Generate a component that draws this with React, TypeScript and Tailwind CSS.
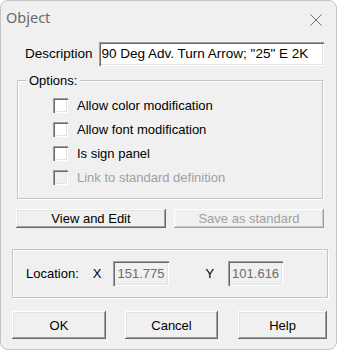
import React from "react";

const raised =
  "shadow-[inset_-1px_-1px_0_#696969,inset_1px_1px_0_#ffffff,inset_-2px_-2px_0_#a0a0a0,inset_2px_2px_0_#e3e3e3]";
const raisedDisabled =
  "shadow-[inset_-1px_-1px_0_#a0a0a0,inset_1px_1px_0_#ffffff,inset_-2px_-2px_0_#c8c8c8,inset_2px_2px_0_#f0f0f0]";
const sunken =
  "shadow-[inset_1px_1px_0_#a0a0a0,inset_2px_2px_0_#696969,inset_-1px_-1px_0_#ffffff,inset_-2px_-2px_0_#e3e3e3]";
const etched = "border border-[#c4c4c4] shadow-[1px_1px_0_#ffffff,inset_1px_1px_0_#ffffff]";

function CheckRow({ label, disabled }: { label: string; disabled?: boolean }) {
  return (
    <div className="h-[24px] flex items-center">
      <div
        className={`w-[15px] h-[15px] ${disabled ? "bg-[#f0f0f0]" : "bg-white"} shadow-[inset_1px_1px_0_#a0a0a0,inset_2px_2px_0_#696969,inset_-1px_-1px_0_#ffffff,inset_-2px_-2px_0_#e3e3e3]`}
      />
      <span className={`ml-[9px] ${disabled ? "text-[#a0a0a0]" : "text-black"}`}>{label}</span>
    </div>
  );
}

export default function App() {
  return (
    <div className="w-[337px] h-[350px] bg-white font-['Liberation_Sans',Arial,sans-serif] text-[13px] leading-none text-black">
      <div className="w-[337px] h-[350px] rounded-[8px] border border-[#c4c4c4] bg-[#f0f0f0] overflow-hidden flex flex-col">
        {/* Title bar */}
        <div className="h-[33px] flex items-center justify-between pl-[5px] pr-[14px]">
          <span className="font-['Noto_Sans',sans-serif] text-[14.5px] text-[#6b6b6b]">Object</span>
          <svg width="12" height="12" viewBox="0 0 12 12" className="mt-[4px]">
            <path d="M0.5 0.5 L11.5 11.5 M11.5 0.5 L0.5 11.5" stroke="#707070" strokeWidth="1" fill="none" />
          </svg>
        </div>

        {/* Description */}
        <div className="mt-[8px] h-[24px] flex items-center pl-[24px]">
          <span className="text-[13.5px]">Description</span>
          <div className={`ml-[6px] w-[225px] h-[24px] bg-white flex items-center pl-[3px] text-[13.5px] whitespace-nowrap overflow-hidden ${sunken}`}>
            90 Deg Adv. Turn Arrow; "25" E 2K
          </div>
        </div>

        {/* Options group */}
        <div className={`relative mt-[14px] ml-[16px] w-[306px] h-[119px] ${etched} pt-[12px] pl-[35px]`}>
          <span className="absolute left-[8px] top-[-7px] bg-[#f0f0f0] px-[3px]">Options:</span>
          <CheckRow label="Allow color modification" />
          <CheckRow label="Allow font modification" />
          <CheckRow label="Is sign panel" />
          <CheckRow label="Link to standard definition" disabled />
        </div>

        {/* View / Save buttons */}
        <div className="mt-[10px] ml-[15px] flex gap-[8px]">
          <div className={`w-[150px] h-[19px] flex items-center justify-center ${raised}`}>View and Edit</div>
          <div className={`w-[150px] h-[19px] flex items-center justify-center text-[#a0a0a0] ${raisedDisabled}`}>
            Save as standard
          </div>
        </div>

        {/* Location group */}
        <div className={`mt-[21px] ml-[11px] w-[316px] h-[49px] ${etched} flex items-center pl-[13px]`}>
          <span>Location:</span>
          <span className="ml-[14px]">X</span>
          <div className={`ml-[12px] w-[56px] h-[25px] bg-[#f0f0f0] flex items-center pl-[4px] text-[#6d6d6d] ${sunken}`}>
            151.775
          </div>
          <span className="ml-[36px]">Y</span>
          <div className={`ml-[14px] w-[55px] h-[25px] bg-[#f0f0f0] flex items-center pl-[4px] text-[#6d6d6d] ${sunken}`}>
            101.616
          </div>
        </div>

        {/* Bottom buttons */}
        <div className="mt-[13px] ml-[11px] flex">
          <div className={`w-[94px] h-[28px] flex items-center justify-center ${raised}`}>OK</div>
          <div className={`ml-[19px] w-[93px] h-[28px] flex items-center justify-center ${raised}`}>Cancel</div>
          <div className={`ml-[20px] w-[89px] h-[28px] flex items-center justify-center ${raised}`}>Help</div>
        </div>
      </div>
    </div>
  );
}
